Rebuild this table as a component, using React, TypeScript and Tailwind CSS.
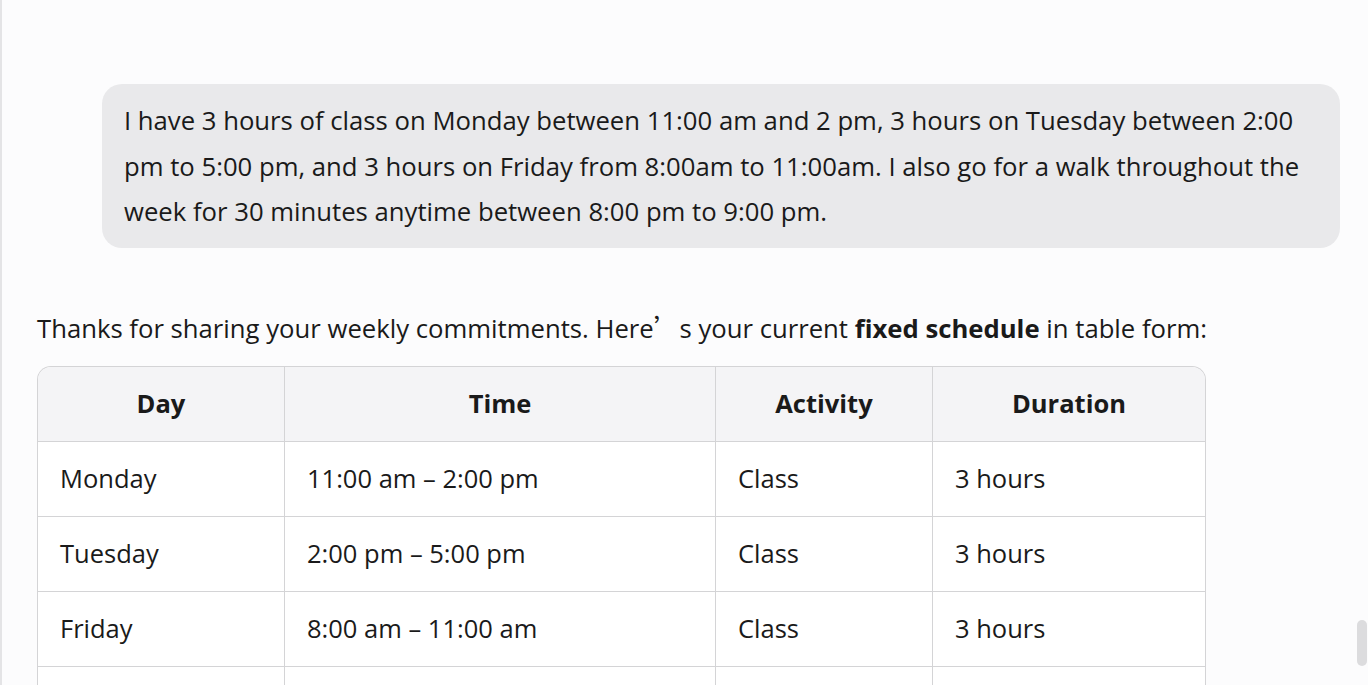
import React from "react";

const rows = [
	{ day: "Monday", time: "11:00 am – 2:00 pm", activity: "Class", duration: "3 hours" },
	{ day: "Tuesday", time: "2:00 pm – 5:00 pm", activity: "Class", duration: "3 hours" },
	{ day: "Friday", time: "8:00 am – 11:00 am", activity: "Class", duration: "3 hours" },
	{ day: "", time: "", activity: "", duration: "" },
];

export default function App() {
	return (
		<div
			className="relative h-[685px] w-[1368px] overflow-hidden bg-[#fcfcfd] text-[#1a1a1a] border-l-2 border-[#e4e4e6]"
			style={{ fontFamily: '"Open Sans", "Noto Sans CJK SC", sans-serif' }}
		>
			<div className="flex justify-end pt-[84px] pr-[28px]">
				<div className="w-[1238px] rounded-[20px] bg-[#e9e9eb] px-[22px] pt-[14px] pb-[13px] text-[25.7px] leading-[45.5px]">
					I have 3 hours of class on Monday between 11:00 am and 2 pm, 3 hours on Tuesday between 2:00
					pm to 5:00 pm, and 3 hours on Friday from 8:00am to 11:00am. I also go for a walk throughout the
					week for 30 minutes anytime between 8:00 pm to 9:00 pm.
				</div>
			</div>

			<div className="pl-[35px] pt-[56px]">
				<p className="text-[25.7px] leading-[45px]">
					Thanks for sharing your weekly commitments. Here
					<span style={{ fontFamily: '"Noto Sans CJK SC", sans-serif' }}>’</span>s your current{" "}
					<b className="font-bold">fixed schedule</b> in table form:
				</p>

				<div className="mt-[15px] w-[1169px] overflow-hidden rounded-t-[14px] border border-b-0 border-[#d4d4d6]">
					<div className="grid grid-cols-[247px_431px_217px_1fr] bg-[#f4f4f6] text-[25.5px] font-bold">
						<div className="flex h-[74px] items-center justify-center border-r border-[#d4d4d6]">Day</div>
						<div className="flex h-[74px] items-center justify-center border-r border-[#d4d4d6]">Time</div>
						<div className="flex h-[74px] items-center justify-center border-r border-[#d4d4d6]">Activity</div>
						<div className="flex h-[74px] items-center justify-center">Duration</div>
					</div>
					{rows.map((r, i) => (
						<div
							key={i}
							className="grid grid-cols-[247px_431px_217px_1fr] border-t border-[#d4d4d6] bg-white text-[25.5px]"
						>
							<div className="flex h-[74px] items-center border-r border-[#d4d4d6] pl-[22px]">{r.day}</div>
							<div className="flex h-[74px] items-center border-r border-[#d4d4d6] pl-[22px]">{r.time}</div>
							<div className="flex h-[74px] items-center border-r border-[#d4d4d6] pl-[22px]">{r.activity}</div>
							<div className="flex h-[74px] items-center pl-[22px]">{r.duration}</div>
						</div>
					))}
				</div>
			</div>

			<div className="absolute left-[1355px] top-[620px] h-[46px] w-[10px] rounded-full bg-[#dcdcde]" />
		</div>
	);
}
